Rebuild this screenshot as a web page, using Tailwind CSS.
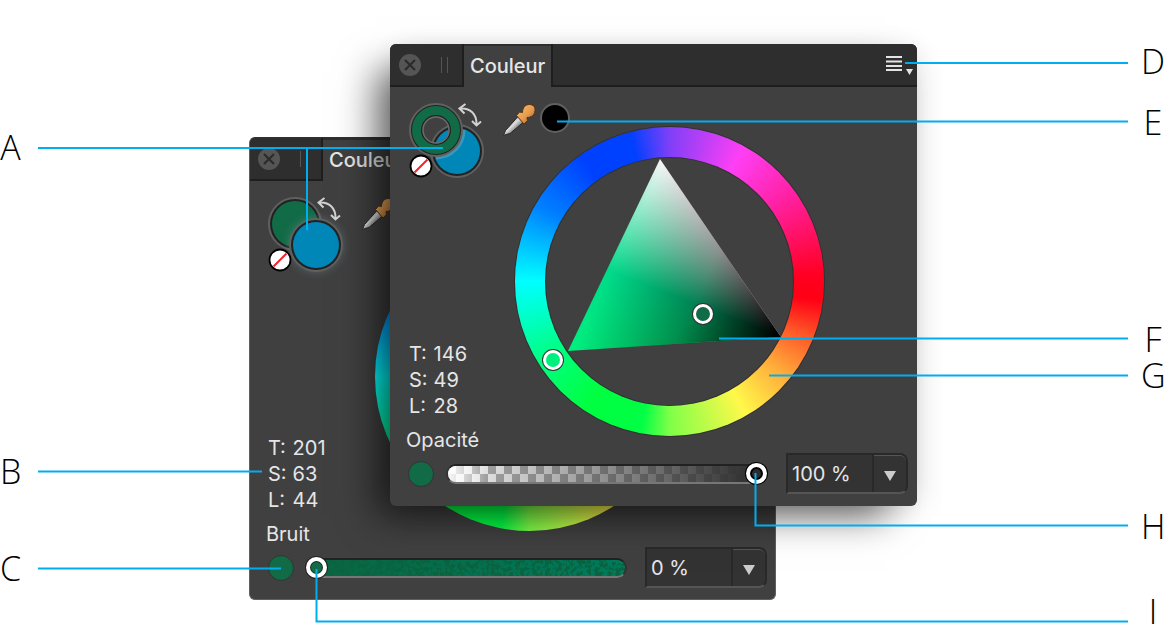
<!DOCTYPE html>
<html lang="fr">
<head>
<meta charset="utf-8">
<meta name="viewport" content="width=device-width, initial-scale=1">
<title>Panneau Couleur</title>
<script src="https://cdn.jsdelivr.net/npm/@tailwindcss/browser@4"></script>
</head>
<body class="bg-white font-['Inter','Liberation_Sans',sans-serif]">
<svg class="absolute size-0" aria-hidden="true">
  <defs>
    <linearGradient id="amber" x1="0" y1="0" x2="1" y2="1"><stop offset="0" stop-color="#f8c07a"/><stop offset=".55" stop-color="#e59b4d"/><stop offset="1" stop-color="#9c571a"/></linearGradient>
    <linearGradient id="steel" x1=".3" y1=".3" x2=".7" y2=".7"><stop offset="0" stop-color="#a8a8a8"/><stop offset=".4" stop-color="#dedede"/><stop offset="1" stop-color="#6a6a6a"/></linearGradient>
    <symbol id="close" viewBox="0 0 22 22"><circle cx="11" cy="11" r="11" fill="#555"/><path d="M6 6l10 10M16 6L6 16" stroke="#2b2b2b" stroke-width="2.200"/></symbol>
    <symbol id="none" viewBox="0 0 24 24"><circle cx="12" cy="12" r="10.500" fill="#fff" stroke="#000" stroke-width="1.800"/><path d="M5.500 18.500L18.500 5.500" stroke="#f5202c" stroke-width="2"/></symbol>
    <symbol id="swap" viewBox="0 0 24 26"><path d="M2 5.500C12 4.500 19 11 18.500 22M7.500 1L1.500 5.500l5 5M14 18l4.500 4.500L23 18.500" fill="none" stroke="#d2d2d2" stroke-width="2"/></symbol>
    <symbol id="dropper" viewBox="0 0 34 34"><path d="M1.500 32.500l2-5L16 13.500l5.500 5.500L8 30.500l-4 1z" fill="url(#steel)" stroke="#2a2a2a" stroke-width="1"/><path d="M14.500 12.500l3-3.500 3 .5c0-5 3-8 7-8 4 0 6 3 5.500 6.500-.5 4-3.500 6.500-8 6.500l.5 3-3.500 3.500z" fill="url(#amber)" stroke="#5a3010" stroke-width="1"/></symbol>
  </defs>
</svg>
<main class="relative min-h-[624px] overflow-hidden">

  <!-- Back panel: noise -->
  <section aria-label="Couleur, bruit" class="absolute left-[249px] top-[137px] w-[527px] overflow-hidden rounded-md border border-[#606060] border-t-[#303030] bg-[#404040] text-[#e6e6e6]">
    <header class="flex h-[43px] bg-[#2e2e2e]">
      <div class="flex w-[73px] items-center gap-5 border-r-2 border-b-2 border-[#1e1e1e] pl-2">
        <button aria-label="Fermer" class="size-[22px]"><svg class="size-full"><use href="#close"/></svg></button>
        <span class="h-4 w-[7px] border-x border-[#555]"></span>
      </div>
      <h2 class="mt-0.5 bg-[#404040] px-1.5 pt-1.5 text-xl leading-7 font-medium">Couleur</h2>
      <div class="flex-1 border-b-2 border-l-2 border-[#1e1e1e]"></div>
    </header>
    <div class="grid h-[366px] grid-cols-1 grid-rows-1">
      <div class="col-start-1 row-start-1 mt-[41px] ml-[125px] size-[309px] rounded-full bg-[conic-gradient(#7f3ff8,#ff3ff5_29deg,#ff20a0_55deg,#ff0020_88deg,#ff0015_97deg,#ff5a28_112deg,#ffa83a_128deg,#fff84a_150deg,#7fff48_180deg,#00ff45_191deg,#00ff40_213deg,#00ff80_238deg,#00ffff_270deg,#0080ff_300deg,#0040ff_325deg,#0040ff_345deg,#7f3ff8)]"></div>
      <div class="col-start-1 row-start-1 flex flex-col justify-between pl-4">
        <div class="flex gap-5 pt-4 pl-0.5">
          <div class="relative size-[77px]">
            <button aria-label="Trait" class="absolute top-0 left-0 size-[54px] rounded-full border-2 border-[#606060] bg-[#222] p-0.5"><span class="block size-full rounded-full bg-[#126b47]"></span></button>
            <button aria-label="Fond" class="absolute top-[21px] left-[21px] size-[54px] rounded-full border-2 border-[#606060] bg-[#222] p-0.5 shadow-[0_0_8px_rgba(120,150,160,0.4)]"><span class="block size-full rounded-full bg-[#0087b8]"></span></button>
            <button aria-label="Aucun" class="absolute top-[51px] left-0 size-6"><svg class="size-full"><use href="#none"/></svg></button>
            <button aria-label="Inverser" class="absolute top-0 left-[49px] h-[26px] w-6"><svg class="size-full"><use href="#swap"/></svg></button>
          </div>
          <button aria-label="Pipette" class="-ml-1 size-[34px]"><svg class="size-full"><use href="#dropper"/></svg></button>
        </div>
        <div>
          <dl class="grid w-fit grid-cols-[auto_auto] gap-x-1.5 pl-0.5 text-xl leading-[26px]">
            <dt>T:</dt><dd>201</dd><dt>S:</dt><dd>63</dd><dt>L:</dt><dd>44</dd>
          </dl>
          <label for="bruit" class="mt-2 block text-xl leading-[26px]">Bruit</label>
        </div>
      </div>
    </div>
    <div class="flex h-[52px] items-start pr-2 pl-[18px]">
      <span class="mt-2 size-[26px] rounded-full border border-[#333] bg-[#126b47]"></span>
      <div class="mt-2.5 ml-3 grid h-[21px] flex-1 grid-cols-1 grid-rows-1 items-center">
        <svg class="col-start-1 row-start-1 h-5 w-full overflow-hidden rounded-full border-2 border-t-[#222] border-x-[#333] border-b-[#777] bg-[#0b6340]" aria-hidden="true">
          <defs>
            <filter id="grain" x="0" y="0" width="1" height="1"><feTurbulence type="fractalNoise" baseFrequency=".24" numOctaves="3" seed="4"/><feColorMatrix values="0 0 0 0 0  0 0 0 0 .2  0 0 0 0 .11  7 0 0 0 -2.900"/></filter>
            <linearGradient id="fade"><stop offset=".1" stop-color="#333"/><stop offset="1" stop-color="#fff"/></linearGradient>
            <mask id="ramp"><rect width="100%" height="100%" fill="url(#fade)"/></mask>
          </defs>
          <g mask="url(#ramp)"><rect width="100%" height="100%" filter="url(#grain)"/></g>
        </svg>
        <input id="bruit" type="range" min="0" max="100" value="0" class="col-start-1 row-start-1 h-[21px] w-full appearance-none bg-transparent [&::-webkit-slider-thumb]:size-[21px] [&::-webkit-slider-thumb]:appearance-none [&::-webkit-slider-thumb]:rounded-full [&::-webkit-slider-thumb]:border-4 [&::-webkit-slider-thumb]:border-white [&::-webkit-slider-thumb]:bg-[#126b47] [&::-webkit-slider-thumb]:shadow-[0_0_0_1px_#222,inset_0_0_0_1px_#222]">
      </div>
      <div class="ml-[18px] flex h-[41px] w-[122px] rounded-r-lg border-2 border-[#292929] border-b-[#555] bg-[#333]">
        <input aria-label="Valeur du bruit" value="0 %" class="w-[86px] min-w-0 border-r-2 border-[#292929] bg-transparent pl-1 text-xl">
        <button aria-label="Choisir le bruit" class="flex flex-1 items-center justify-center rounded-r-md border-t border-[#555] pt-1"><svg class="h-3 w-3" viewBox="0 0 12 12"><path d="M0 1h12L6 11z" fill="#ccc"/></svg></button>
      </div>
    </div>
  </section>

  <!-- Front panel: opacity -->
  <section aria-label="Couleur, opacité" class="absolute left-[390px] top-[44px] w-[527px] rounded-md bg-[#404040] text-[#e6e6e6] shadow-[-22px_18px_36px_-8px_rgba(0,0,0,0.6),4px_4px_30px_-8px_rgba(0,0,0,0.2)]">
    <header class="flex h-[43px] overflow-hidden rounded-t-md bg-[#2e2e2e]">
      <div class="flex w-[74px] items-center gap-5 border-r-2 border-b-2 border-[#1e1e1e] pl-[9px]">
        <button aria-label="Fermer" class="size-[22px]"><svg class="size-full"><use href="#close"/></svg></button>
        <span class="h-4 w-[7px] border-x border-[#555]"></span>
      </div>
      <h2 class="mt-0.5 bg-[#404040] px-1.5 pt-1.5 text-xl leading-7 font-medium">Couleur</h2>
      <div class="flex flex-1 items-start justify-end border-b-2 border-l-2 border-[#1e1e1e] pt-3 pr-1">
        <button aria-label="Menu du panneau" class="h-[19px] w-[27px]"><svg class="size-full" viewBox="0 0 27 19"><path d="M0 1h16M0 5.500h16M0 10h16M0 14h16" stroke="#e4e4e4" stroke-width="2"/><path d="M20 13h7l-3.500 6z" fill="#e4e4e4"/></svg></button>
      </div>
    </header>
    <div class="grid h-[366px] grid-cols-1 grid-rows-1">
      <div class="relative col-start-1 row-start-1 mt-10 ml-[125px] size-[309px] rounded-full bg-[conic-gradient(#7f3ff8,#ff3ff5_29deg,#ff20a0_55deg,#ff0020_88deg,#ff0015_97deg,#ff5a28_112deg,#ffa83a_128deg,#fff84a_150deg,#7fff48_180deg,#00ff45_191deg,#00ff40_213deg,#00ff80_238deg,#00ffff_270deg,#0080ff_300deg,#0040ff_325deg,#0040ff_345deg,#7f3ff8)] shadow-[0_0_0_1px_rgba(0,0,0,0.25)]">
        <div class="absolute inset-[30px] rounded-full bg-[#404040] shadow-[inset_0_0_0_1px_rgba(0,0,0,0.25)]"></div>
        <div class="absolute top-[32px] left-[53px] h-[192px] w-[213px] bg-[linear-gradient(115.6deg,transparent_32%,rgba(0,0,0,0.4)_64%,rgba(0,0,0,0.7)_80%,#000_96%),conic-gradient(at_213px_178px,#00f07e_266deg,#00d98a_291deg,#f4f4f4_326deg)] [clip-path:polygon(92px_0,0_192px,213px_178px)]"></div>
        <button aria-label="Saturation et luminosité" class="absolute top-[177px] left-[178px] size-5 rounded-full border-[3px] border-white bg-[#126b47] shadow-[0_0_0_1px_#333]"></button>
        <button aria-label="Teinte" class="absolute top-[223px] left-[28px] size-5 rounded-full border-[3px] border-white bg-[#00f07e] shadow-[0_0_0_1px_#333]"></button>
      </div>
      <div class="col-start-1 row-start-1 flex flex-col justify-between pl-4">
        <div class="flex pt-4 pl-[3px]">
          <div class="relative size-[77px]">
            <button aria-label="Fond" class="absolute top-[21px] left-[21px] size-[54px] rounded-full border-2 border-[#606060] bg-[#222] p-0.5"><span class="block size-full rounded-full bg-[#0087b8]"></span></button>
            <button aria-label="Trait" class="absolute top-0 left-0 size-[56px]"><svg class="size-full overflow-visible" viewBox="0 0 56 56"><path d="M53 27A26 26 0 0 1 27 53" fill="none" stroke="#9fb8c0" stroke-opacity=".35" stroke-width="7"/><circle cx="27" cy="27" r="19.500" fill="none" stroke="#222" stroke-width="12"/><circle cx="27" cy="27" r="26" fill="none" stroke="#606060" stroke-width="2"/><circle cx="27" cy="27" r="19.500" fill="none" stroke="#126b47" stroke-width="9"/><circle cx="27" cy="27" r="13" fill="none" stroke="#6a6a6a" stroke-width="1.500"/></svg></button>
            <button aria-label="Aucun" class="absolute top-[51px] left-0 size-6"><svg class="size-full"><use href="#none"/></svg></button>
            <button aria-label="Inverser" class="absolute top-0 left-[49px] h-[26px] w-6"><svg class="size-full"><use href="#swap"/></svg></button>
          </div>
          <button aria-label="Pipette" class="ml-4 size-[34px]"><svg class="size-full"><use href="#dropper"/></svg></button>
          <button aria-label="Couleur prélevée" class="ml-1 size-[30px] rounded-full border-2 border-[#606060] bg-black"></button>
        </div>
        <div>
          <dl class="grid w-fit grid-cols-[auto_auto] gap-x-1.5 pl-[3px] text-xl leading-[26px]">
            <dt>T:</dt><dd>146</dd><dt>S:</dt><dd>49</dd><dt>L:</dt><dd>28</dd>
          </dl>
          <label for="opacite" class="mt-2 block text-xl leading-[26px]">Opacité</label>
        </div>
      </div>
    </div>
    <div class="flex h-[53px] items-start pr-[9px] pl-[18px]">
      <span class="mt-2 size-[26px] rounded-full border border-[#333] bg-[#126b47]"></span>
      <div class="mt-2.5 ml-3 grid h-[21px] flex-1 grid-cols-1 grid-rows-1 items-center">
        <div class="col-start-1 row-start-1 h-5 w-full overflow-hidden rounded-full border-2 border-t-[#222] border-x-[#333] border-b-[#777]">
          <div class="size-full bg-[linear-gradient(90deg,rgba(255,255,255,0.85)_1%,rgba(255,255,255,0)_12%),linear-gradient(90deg,rgba(51,51,51,0)_5%,rgba(51,51,51,0.5)_50%,#333_94%),conic-gradient(#a8a8a8_25%,#eee_0_50%,#a8a8a8_0_75%,#eee_0)] bg-size-[100%_100%,100%_100%,16px_16px]"></div>
        </div>
        <input id="opacite" type="range" min="0" max="100" value="100" class="col-start-1 row-start-1 h-[21px] w-full appearance-none bg-transparent [&::-webkit-slider-thumb]:size-[21px] [&::-webkit-slider-thumb]:appearance-none [&::-webkit-slider-thumb]:rounded-full [&::-webkit-slider-thumb]:border-4 [&::-webkit-slider-thumb]:border-white [&::-webkit-slider-thumb]:bg-[#2c2c2c] [&::-webkit-slider-thumb]:shadow-[0_0_0_1px_#000,inset_0_0_0_2px_#000]">
      </div>
      <div class="ml-[19px] flex h-[41px] w-[122px] rounded-r-lg border-2 border-[#292929] border-b-[#555] bg-[#333]">
        <input aria-label="Valeur de l’opacité" value="100 %" class="w-[86px] min-w-0 border-r-2 border-[#292929] bg-transparent pl-1 text-xl">
        <button aria-label="Choisir l’opacité" class="flex flex-1 items-center justify-center rounded-r-md border-t border-[#555] pt-1"><svg class="h-3 w-3" viewBox="0 0 12 12"><path d="M0 1h12L6 11z" fill="#ccc"/></svg></button>
      </div>
    </div>
  </section>

  <!-- Leader lines -->
  <svg class="pointer-events-none absolute top-0 left-0 h-[624px] w-[1165px]" viewBox="0 0 1165 624" fill="none" stroke="#00aeef" stroke-width="2" aria-hidden="true">
    <path d="M38 148H443M307 148V230M38 471.500H262M38 568.500H281M905 63H1128M557 121.500H1128M719 338.500H1128M769 375.500H1128M755.500 473V525.500H1128M316.500 569V621.500H1128"/>
  </svg>

  <!-- Callout letters -->
  <div class="pointer-events-none text-center font-['Open_Sans','Noto_Sans',sans-serif] text-[34px] leading-9 font-light text-black">
    <span class="absolute top-[129px] left-0 w-[21px]">A</span>
    <span class="absolute top-[453px] left-0 w-[21px]">B</span>
    <span class="absolute top-[550px] left-0 w-[21px]">C</span>
    <span class="absolute top-[43px] left-[1141px] w-6">D</span>
    <span class="absolute top-[104px] left-[1141px] w-6">E</span>
    <span class="absolute top-[321px] left-[1141px] w-6">F</span>
    <span class="absolute top-[357px] left-[1141px] w-6">G</span>
    <span class="absolute top-[508px] left-[1141px] w-6">H</span>
    <span class="absolute top-[593px] left-[1141px] w-6">I</span>
  </div>
</main>
</body>
</html>
